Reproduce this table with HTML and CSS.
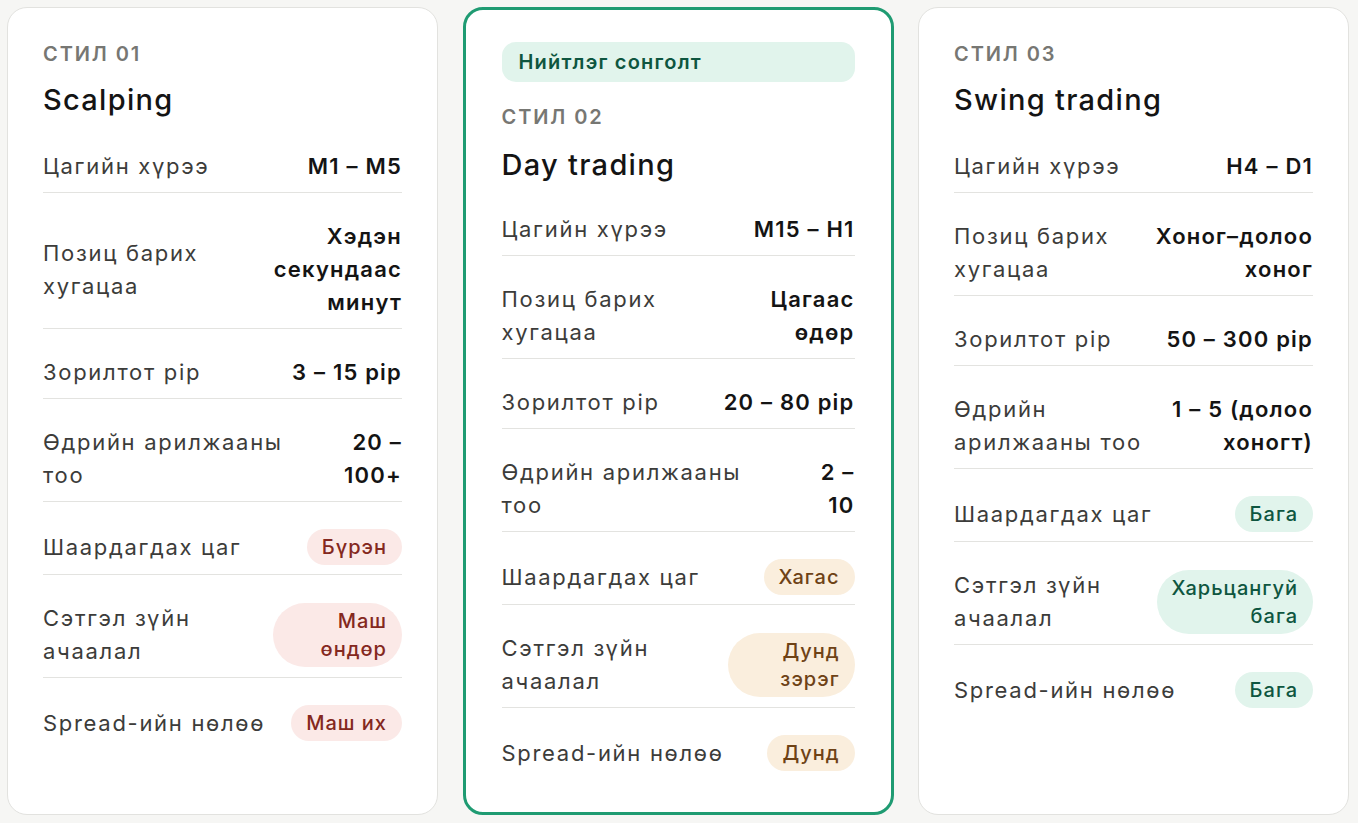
FILE: index.html
```html
<!DOCTYPE html>
<html lang="mn">
<head>
<meta charset="utf-8">
<title>Арилжааны стилүүд</title>
<link rel="stylesheet" href="styles.css">
</head>
<body>
<main class="grid">
  <section class="card">
    <div class="eyebrow">СТИЛ 01</div>
    <h2 class="title">Scalping</h2>
    <dl class="rows">
      <div class="row"><dt>Цагийн хүрээ</dt><dd>M1 – M5</dd></div>
      <div class="row"><dt>Позиц барих хугацаа</dt><dd>Хэдэн секундаас минут</dd></div>
      <div class="row"><dt>Зорилтот pip</dt><dd>3 – 15 pip</dd></div>
      <div class="row"><dt>Өдрийн арилжааны тоо</dt><dd>20 – 100+</dd></div>
      <div class="row"><dt>Шаардагдах цаг</dt><dd><span class="badge badge-red">Бүрэн</span></dd></div>
      <div class="row"><dt>Сэтгэл зүйн ачаалал</dt><dd><span class="badge badge-red">Маш өндөр</span></dd></div>
      <div class="row"><dt>Spread-ийн нөлөө</dt><dd><span class="badge badge-red">Маш их</span></dd></div>
    </dl>
  </section>

  <section class="card card-featured">
    <div class="tag">Нийтлэг сонголт</div>
    <div class="eyebrow">СТИЛ 02</div>
    <h2 class="title">Day trading</h2>
    <dl class="rows">
      <div class="row"><dt>Цагийн хүрээ</dt><dd>M15 – H1</dd></div>
      <div class="row"><dt>Позиц барих хугацаа</dt><dd>Цагаас өдөр</dd></div>
      <div class="row"><dt>Зорилтот pip</dt><dd>20 – 80 pip</dd></div>
      <div class="row"><dt>Өдрийн арилжааны тоо</dt><dd>2 – 10</dd></div>
      <div class="row"><dt>Шаардагдах цаг</dt><dd><span class="badge badge-amber">Хагас</span></dd></div>
      <div class="row"><dt>Сэтгэл зүйн ачаалал</dt><dd><span class="badge badge-amber">Дунд зэрэг</span></dd></div>
      <div class="row"><dt>Spread-ийн нөлөө</dt><dd><span class="badge badge-amber">Дунд</span></dd></div>
    </dl>
  </section>

  <section class="card">
    <div class="eyebrow">СТИЛ 03</div>
    <h2 class="title">Swing trading</h2>
    <dl class="rows">
      <div class="row"><dt>Цагийн хүрээ</dt><dd>H4 – D1</dd></div>
      <div class="row"><dt>Позиц барих хугацаа</dt><dd>Хоног–долоо хоног</dd></div>
      <div class="row"><dt>Зорилтот pip</dt><dd>50 – 300 pip</dd></div>
      <div class="row"><dt>Өдрийн арилжааны тоо</dt><dd>1 – 5 (долоо хоногт)</dd></div>
      <div class="row"><dt>Шаардагдах цаг</dt><dd><span class="badge badge-green">Бага</span></dd></div>
      <div class="row"><dt>Сэтгэл зүйн ачаалал</dt><dd><span class="badge badge-green">Харьцангуй бага</span></dd></div>
      <div class="row"><dt>Spread-ийн нөлөө</dt><dd><span class="badge badge-green">Бага</span></dd></div>
    </dl>
  </section>
</main>
</body>
</html>
```

FILE: styles.css
```css
* { box-sizing: border-box; }

html, body {
  margin: 0;
  padding: 0;
  background: #f6f6f4;
  font-family: Inter, "Noto Sans", "DejaVu Sans", sans-serif;
  color: #141414;
}

.grid {
  display: grid;
  grid-template-columns: repeat(3, 1fr);
  gap: 24.5px;
  padding: 7px 9px 8px 7px;
  min-height: 100vh;
  align-items: stretch;
}

.card {
  background: #ffffff;
  border: 1px solid #e2e2df;
  border-radius: 20px;
  padding: 34px 35px;
}

.card-featured {
  border: 3px solid #1f9b72;
  padding: 32px 36px;
}

.tag {
  background: #e1f4ec;
  color: #0e5640;
  font-size: 20px;
  font-weight: 600;
  letter-spacing: 1.2px;
  line-height: 40px;
  height: 40px;
  border-radius: 14px;
  padding: 0 17px;
  margin-bottom: 23px;
}

.eyebrow {
  font-size: 20px;
  line-height: 24px;
  font-weight: 600;
  letter-spacing: 1.9px;
  color: #777773;
}

.title {
  margin: 16px 0 5px;
  font-size: 29px;
  line-height: 36px;
  font-weight: 500;
  color: #141414;
  letter-spacing: 1.3px;
}

.card-featured .title {
  margin: 18px 0 3px;
}

.rows {
  margin: 0;
  padding: 0;
}

.row {
  display: flex;
  justify-content: space-between;
  align-items: center;
  gap: 14px;
  padding: 27px 0 9px;
  border-bottom: 1px solid #e3e3e0;
}

.row:last-child {
  border-bottom: none;
}

.row dt {
  margin: 0;
  font-size: 22px;
  line-height: 33px;
  font-weight: 400;
  color: #3c3c3a;
  letter-spacing: 1.7px;
}

.row dd {
  margin: 0;
  font-size: 22px;
  line-height: 33px;
  font-weight: 600;
  color: #141414;
  text-align: right;
  letter-spacing: 1.2px;
}

.badge {
  display: inline-block;
  font-size: 20px;
  line-height: 28px;
  font-weight: 500;
  padding: 4px 15px;
  border-radius: 40px;
  text-align: right;
  letter-spacing: 1px;
  vertical-align: middle;
}

.badge-red { background: #fbe9e7; color: #842820; }
.badge-amber { background: #faeedd; color: #6e4216; }
.badge-green { background: #e1f4ec; color: #0e5640; }
```
